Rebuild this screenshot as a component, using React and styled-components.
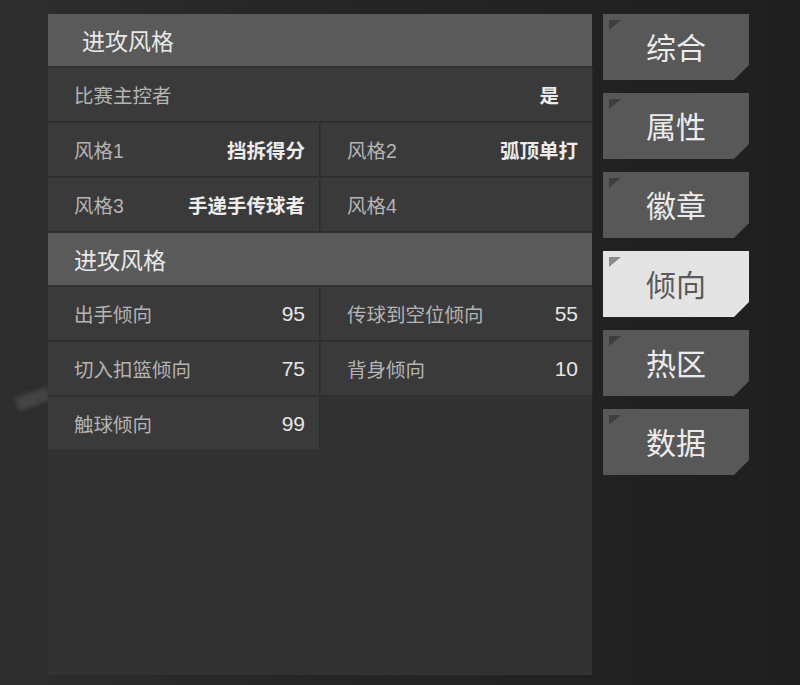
import styled, { createGlobalStyle } from 'styled-components';

const GlobalStyle = createGlobalStyle`
  html, body {
    margin: 0;
    padding: 0;
    height: 100%;
  }
  body {
    background: linear-gradient(90deg, #2e2e2e 0%, #262626 35%, #1f1f1f 100%);
    font-family: "Liberation Sans", "Noto Sans CJK SC", sans-serif;
    overflow: hidden;
  }
`;

const Page = styled.div`
  position: relative;
  width: 800px;
  height: 685px;
  display: flex;
  align-items: flex-start;
  gap: 11px;
  padding: 14px 0 0 48px;
  box-sizing: border-box;
`;

const Streak = styled.div`
  position: absolute;
  left: 16px;
  top: 392px;
  width: 34px;
  height: 14px;
  background: #4a4a4a;
  filter: blur(2px);
  transform: rotate(-20deg);
  opacity: 0.8;
`;

const Panel = styled.div`
  position: relative;
  width: 544px;
  height: 661px;
  background: #323232;
  display: flex;
  flex-direction: column;
  gap: 2px;
`;

const Header = styled.div`
  height: 52px;
  background: #5a5a5a;
  color: #e8e8e8;
  font-size: 23px;
  display: flex;
  align-items: center;
  padding-left: ${({ indent }) => indent}px;
`;

const Grid = styled.div`
  display: grid;
  grid-template-columns: 271px 271px;
  gap: 2px;
`;

const Cell = styled.div`
  grid-column: ${({ wide }) => (wide ? '1 / 3' : 'auto')};
  height: 53px;
  background: #3a3a3a;
  box-shadow: 0 1px 0 #2c2c2c, 1px 0 0 #2c2c2c;
  display: flex;
  align-items: center;
  justify-content: space-between;
  padding: 0 ${({ pad }) => pad || 14}px 0 26px;
`;

const Label = styled.span`
  color: #b4b4b4;
  font-size: 19.5px;
`;

const Value = styled.span`
  color: #ececec;
  font-size: 19.5px;
  font-weight: 700;
`;

const Num = styled.span`
  color: #e6e6e6;
  font-size: 21px;
`;

const Tabs = styled.div`
  display: flex;
  flex-direction: column;
  gap: 13px;
`;

const Tab = styled.div`
  position: relative;
  width: 146px;
  height: 66px;
  background: ${({ active }) => (active ? '#e4e4e4' : '#585858')};
  color: ${({ active }) => (active ? '#5a5a5a' : '#ececec')};
  font-size: 30px;
  display: flex;
  align-items: center;
  justify-content: center;
  padding-bottom: 2px;
  box-sizing: border-box;
  clip-path: polygon(0 0, 100% 0, 100% calc(100% - 15px), calc(100% - 15px) 100%, 0 100%);

  &::before {
    content: '';
    position: absolute;
    left: 6px;
    top: 6px;
    width: 0;
    height: 0;
    border-top: 10px solid ${({ active }) => (active ? '#8a8a8a' : '#3e3e3e')};
    border-right: 12px solid transparent;
  }
`;

const tabs = ['综合', '属性', '徽章', '倾向', '热区', '数据'];

const styleRows = [
  [
    { label: '风格1', value: '挡拆得分' },
    { label: '风格2', value: '弧顶单打' },
  ],
  [
    { label: '风格3', value: '手递手传球者' },
    { label: '风格4', value: '' },
  ],
];

const tendencies = [
  { label: '出手倾向', value: 95 },
  { label: '传球到空位倾向', value: 55 },
  { label: '切入扣篮倾向', value: 75 },
  { label: '背身倾向', value: 10 },
  { label: '触球倾向', value: 99 },
];

export default function App() {
  return (
    <>
      <GlobalStyle />
      <Page>
        <Streak />
        <Panel>
          <Header indent={34}>进攻风格</Header>
          <Grid>
            <Cell wide pad={33}>
              <Label>比赛主控者</Label>
              <Value>是</Value>
            </Cell>
            {styleRows.flat().map((item) => (
              <Cell key={item.label}>
                <Label>{item.label}</Label>
                <Value>{item.value}</Value>
              </Cell>
            ))}
          </Grid>
          <Header indent={26}>进攻风格</Header>
          <Grid>
            {tendencies.map((item) => (
              <Cell key={item.label}>
                <Label>{item.label}</Label>
                <Num>{item.value}</Num>
              </Cell>
            ))}
          </Grid>
        </Panel>
        <Tabs>
          {tabs.map((t) => (
            <Tab key={t} active={t === '倾向'}>
              {t}
            </Tab>
          ))}
        </Tabs>
      </Page>
    </>
  );
}
